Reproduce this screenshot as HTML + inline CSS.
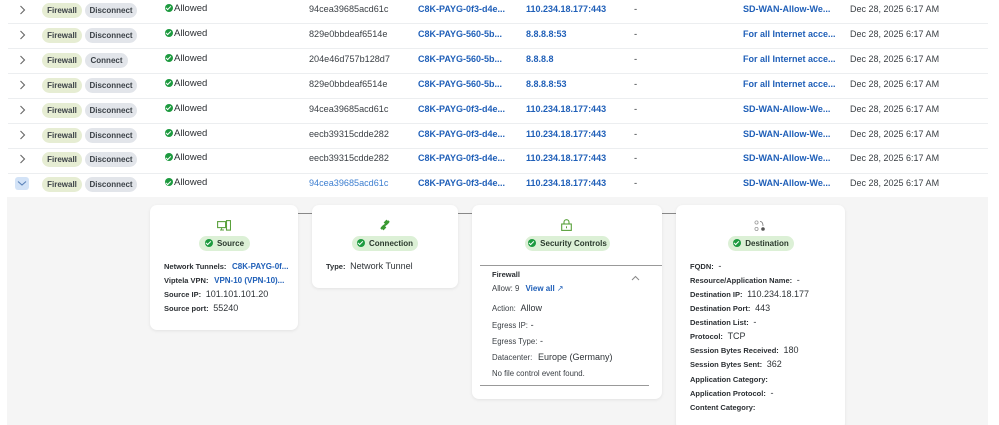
<!DOCTYPE html>
<html><head><style>
*{margin:0;padding:0;box-sizing:border-box}
html,body{width:999px;height:425px;overflow:hidden}
body{background:#fff;font-family:"Liberation Sans",sans-serif;color:#2b2f33;position:relative;font-size:9.5px}
.a{position:absolute;white-space:nowrap}
.line{position:absolute;left:8px;width:980px;height:1px;background:#eceef0}
.pill{position:absolute;height:15px;border-radius:8px;font-size:8px;font-weight:bold;line-height:15px;text-align:center;color:#3c4248}
.fw{left:42px;width:40px;background:#e6edd3}
.dc{left:85px;width:52px;background:#e2e5ea}
.cn{left:85px;width:43px;background:#e2e5ea}
.ok{display:inline-block;width:8px;height:8px;border-radius:50%;background:#1d9a3f;vertical-align:-1px;margin-right:1px;position:relative}
.ok:after{content:"";position:absolute;left:2.2px;top:1.3px;width:2px;height:3.6px;border:solid #fff;border-width:0 1.2px 1.2px 0;transform:rotate(45deg)}
.lk{color:#1f5fb8;font-weight:bold}
.panel{position:absolute;left:7px;top:197px;width:981px;height:228px;background:#f5f5f5}
.card{position:absolute;background:#fff;border-radius:7px;box-shadow:0 1px 3px rgba(0,0,0,.08)}
.badge{position:absolute;height:15px;border-radius:8px;background:#dcf0d6;font-size:8px;font-weight:bold;line-height:15px;color:#2b3a2e;text-align:center}
.badge .ok{margin-right:4px}
.lb{font-weight:bold;font-size:7.5px;color:#2b2f33}
.vl{font-size:9px;color:#2f3438}
.sl{font-size:7.8px;color:#3a3f44}
</style></head><body>

<div class="line" style="top:23px"></div>
<div class="line" style="top:48px"></div>
<div class="line" style="top:73px"></div>
<div class="line" style="top:98px"></div>
<div class="line" style="top:123px"></div>
<div class="line" style="top:148px"></div>
<div class="line" style="top:173px"></div>

<div id="rows"></div>
<script>
var R=[["94cea39685acd61c","C8K-PAYG-0f3-d4e...","110.234.18.177:443","SD-WAN-Allow-We...","Disconnect"],
["829e0bbdeaf6514e","C8K-PAYG-560-5b...","8.8.8.8:53","For all Internet acce...","Disconnect"],
["204e46d757b128d7","C8K-PAYG-560-5b...","8.8.8.8","For all Internet acce...","Connect"],
["829e0bbdeaf6514e","C8K-PAYG-560-5b...","8.8.8.8:53","For all Internet acce...","Disconnect"],
["94cea39685acd61c","C8K-PAYG-0f3-d4e...","110.234.18.177:443","SD-WAN-Allow-We...","Disconnect"],
["eecb39315cdde282","C8K-PAYG-0f3-d4e...","110.234.18.177:443","SD-WAN-Allow-We...","Disconnect"],
["eecb39315cdde282","C8K-PAYG-0f3-d4e...","110.234.18.177:443","SD-WAN-Allow-We...","Disconnect"],
["94cea39685acd61c","C8K-PAYG-0f3-d4e...","110.234.18.177:443","SD-WAN-Allow-We...","Disconnect"]];
var h="";
R.forEach(function(r,i){var c=10+i*24.9;
var last=i==7;
if(last){h+='<div class="a" style="left:15px;top:'+(c-7)+'px;width:14px;height:13px;border-radius:3px;background:#d3e3f7"></div><svg class="a" style="left:17px;top:'+(c-4)+'px" width="10" height="7"><path d="M1 1.5 L5 5 L9 1.5" fill="none" stroke="#5b82b8" stroke-width="1.1"/></svg>';}
else h+='<svg class="a" style="left:19px;top:'+(c-5)+'px" width="7" height="10"><path d="M1.5 1 L5.5 5 L1.5 9" fill="none" stroke="#666" stroke-width="1.1"/></svg>';
h+='<div class="pill fw" style="top:'+(c-7)+'px">Firewall</div>';
h+='<div class="pill '+(r[4]=="Connect"?"cn":"dc")+'" style="top:'+(c-7)+'px">'+r[4]+'</div>';
h+='<div class="a" style="left:165px;top:'+(c-7)+'px;font-size:9.5px"><span class="ok"></span>Allowed</div>';
h+='<div class="a" style="left:309px;top:'+(c-6)+'px;font-size:9.1px;color:'+(last?'#3e7fd0':'#3a3f44')+'">'+r[0]+'</div>';
h+='<div class="a lk" style="left:418px;top:'+(c-6)+'px;font-size:9px">'+r[1]+'</div>';
h+='<div class="a lk" style="left:526px;top:'+(c-6)+'px;font-size:9px">'+r[2]+'</div>';
h+='<div class="a" style="left:634px;top:'+(c-6)+'px">-</div>';
h+='<div class="a lk" style="left:743px;top:'+(c-6)+'px;font-size:9px">'+r[3]+'</div>';
h+='<div class="a" style="left:850px;top:'+(c-6)+'px;font-size:9px;color:#3a3f44">Dec 28, 2025 6:17 AM</div>';
});
document.getElementById("rows").innerHTML=h;
</script>

<div class="panel"></div>
<div class="a" style="left:298px;top:213px;width:14px;height:1px;background:#888"></div>
<div class="a" style="left:458px;top:213px;width:14px;height:1px;background:#888"></div>
<div class="a" style="left:662px;top:213px;width:14px;height:1px;background:#888"></div>

<div class="card" style="left:150px;top:205px;width:148px;height:125px">
<svg class="a" style="left:67px;top:15px" width="14" height="11"><rect x="0.6" y="1.6" width="8" height="6" fill="none" stroke="#5aa13c" stroke-width="1.1"/><path d="M3 10 H7 M4.6 7.6 V10" stroke="#5aa13c"/><rect x="9.5" y="0.6" width="4" height="9.5" fill="none" stroke="#5aa13c" stroke-width="1.1"/></svg>
<div class="badge" style="left:49px;top:31px;width:51px"><span class="ok"></span>Source</div>
<div class="a" style="left:14px;top:56px"><span class="lb">Network Tunnels:</span> <span class="lk" style="font-size:8px;margin-left:3px">C8K-PAYG-0f...</span></div>
<div class="a" style="left:14px;top:70px"><span class="lb">Viptela VPN:</span> <span class="lk" style="font-size:8px;margin-left:3px">VPN-10 (VPN-10)...</span></div>
<div class="a" style="left:14px;top:84px"><span class="lb">Source IP:</span> <span class="vl" style="margin-left:2px">101.101.101.20</span></div>
<div class="a" style="left:14px;top:98px"><span class="lb">Source port:</span> <span class="vl" style="margin-left:2px">55240</span></div>
</div>

<div class="card" style="left:312px;top:205px;width:146px;height:83px">
<svg class="a" style="left:67px;top:14px" width="12" height="12"><path d="M2 10 L10 2" stroke="#3a9a32" stroke-width="2"/><rect x="5.5" y="1.5" width="4" height="4" transform="rotate(45 7.5 3.5)" fill="#3a9a32"/><rect x="2.5" y="6.5" width="4" height="4" transform="rotate(45 4.5 8.5)" fill="#3a9a32"/></svg>
<div class="badge" style="left:40px;top:31px;width:66px"><span class="ok"></span>Connection</div>
<div class="a" style="left:14px;top:56px"><span class="lb">Type:</span> <span class="vl" style="margin-left:2px">Network Tunnel</span></div>
</div>

<div class="card" style="left:472px;top:205px;width:190px;height:194px">
<svg class="a" style="left:89px;top:14px" width="11" height="12"><path d="M3 5 V3.2 A2.5 2.5 0 0 1 8 3.2 V5" fill="none" stroke="#5aa13c" stroke-width="1.1"/><rect x="0.7" y="5" width="9.6" height="6.4" fill="none" stroke="#5aa13c" stroke-width="1.1"/><rect x="5" y="7.3" width="1" height="2" fill="#5aa13c"/></svg>
<div class="badge" style="left:53px;top:31px;width:85px"><span class="ok"></span>Security Controls</div>
<div class="a" style="left:8px;top:60px;width:182px;height:1px;background:#999"></div>
<div class="a lb" style="left:20px;top:65px">Firewall</div>
<div class="a sl" style="left:20px;top:79px">Allow: 9 <span class="lk" style="font-size:8px;margin-left:4px">View all</span> <span style="color:#1f5fb8">&#8599;</span></div>
<svg class="a" style="left:159px;top:70px" width="9" height="6"><path d="M1 5 L4.5 1.5 L8 5" fill="none" stroke="#888"/></svg>
<div class="a" style="left:20px;top:98px"><span class="sl">Action:</span> <span class="vl" style="margin-left:2px">Allow</span></div>
<div class="a" style="left:20px;top:115px"><span class="sl">Egress IP:</span> <span class="vl">-</span></div>
<div class="a" style="left:20px;top:131px"><span class="sl">Egress Type:</span> <span class="vl">-</span></div>
<div class="a" style="left:20px;top:147px"><span class="sl">Datacenter:</span> <span class="vl" style="margin-left:3px">Europe (Germany)</span></div>
<div class="a sl" style="left:20px;top:164px">No file control event found.</div>
<div class="a" style="left:8px;top:180px;width:169px;height:1px;background:#999"></div>
</div>

<div class="card" style="left:676px;top:205px;width:169px;height:225px">
<svg class="a" style="left:78px;top:15px" width="12" height="12"><circle cx="2.5" cy="2.5" r="1.6" fill="none" stroke="#999" stroke-width=".8"/><circle cx="2.5" cy="9" r="1.6" fill="none" stroke="#999" stroke-width=".8"/><circle cx="9" cy="9" r="1.8" fill="#555"/><path d="M6 1.5 Q9 1.5 9 6" fill="none" stroke="#777" stroke-width=".8"/></svg>
<div class="badge" style="left:52px;top:31px;width:66px"><span class="ok"></span>Destination</div>
<div class="a" style="left:14px;top:56px"><span class="lb">FQDN:</span> <span class="vl" style="margin-left:2px">-</span></div>
<div class="a" style="left:14px;top:70px"><span class="lb">Resource/Application Name:</span> <span class="vl" style="margin-left:2px">-</span></div>
<div class="a" style="left:14px;top:84px"><span class="lb">Destination IP:</span> <span class="vl" style="margin-left:2px">110.234.18.177</span></div>
<div class="a" style="left:14px;top:98px"><span class="lb">Destination Port:</span> <span class="vl" style="margin-left:2px">443</span></div>
<div class="a" style="left:14px;top:112px"><span class="lb">Destination List:</span> <span class="vl" style="margin-left:2px">-</span></div>
<div class="a" style="left:14px;top:126px"><span class="lb">Protocol:</span> <span class="vl" style="margin-left:2px">TCP</span></div>
<div class="a" style="left:14px;top:140px"><span class="lb">Session Bytes Received:</span> <span class="vl" style="margin-left:2px">180</span></div>
<div class="a" style="left:14px;top:154px"><span class="lb">Session Bytes Sent:</span> <span class="vl" style="margin-left:2px">362</span></div>
<div class="a" style="left:14px;top:169px"><span class="lb">Application Category:</span></div>
<div class="a" style="left:14px;top:183px"><span class="lb">Application Protocol:</span> <span class="vl" style="margin-left:2px">-</span></div>
<div class="a" style="left:14px;top:197px"><span class="lb">Content Category:</span></div>
</div>
</body></html>
